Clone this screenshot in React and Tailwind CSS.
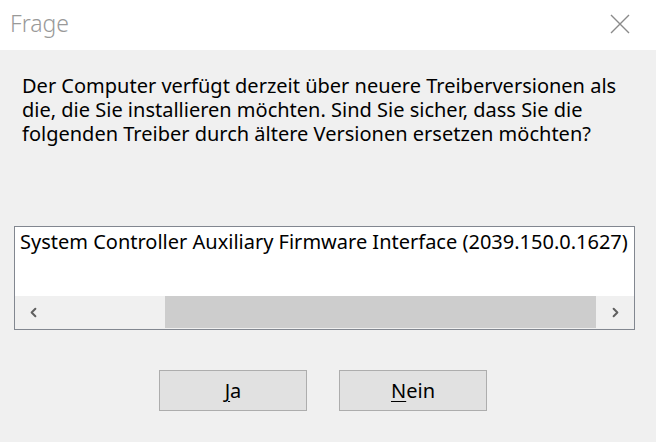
import { ChevronLeft, ChevronRight } from 'lucide-react'

const font = { fontFamily: '"Noto Sans", "Open Sans", sans-serif' }

const DialogButton = ({ mnemonic, rest }) => (
  <button
    type="button"
    className="w-[148px] h-[41px] border border-[#adadad] bg-[#e1e1e1] text-[20px] text-black flex items-center justify-center"
  >
    <span>
      <span className="underline underline-offset-[3px] decoration-1">{mnemonic}</span>
      {rest}
    </span>
  </button>
)

export default function App() {
  return (
    <div className="w-[656px] h-[442px] flex flex-col bg-[#f0f0f0]" style={font}>
      {/* title bar */}
      <div className="h-[50px] bg-white flex items-center justify-between pl-[10px] pr-[26px]">
        <span className="text-[23px] font-light text-[#999999] leading-none pb-[3px]">Frage</span>
        <svg width="20" height="20" viewBox="0 0 20 20" className="text-[#8a8a8a] mb-[2px]">
          <path d="M1 1 L19 19 M19 1 L1 19" stroke="currentColor" strokeWidth="1.4" fill="none" />
        </svg>
      </div>

      {/* message */}
      <div className="pt-[24px] pl-[22px] pr-[10px] text-[20px] leading-[24px] text-black">
        <p>Der Computer verfügt derzeit über neuere Treiberversionen als</p>
        <p>die, die Sie installieren möchten. Sind Sie sicher, dass Sie die</p>
        <p>folgenden Treiber durch ältere Versionen ersetzen möchten?</p>
      </div>

      {/* driver list */}
      <div className="mt-[80px] ml-[14px] w-[621px] border border-[#828790] bg-white">
        <div className="h-[69px] pl-[5px] pt-[3px] text-[20px] leading-[24px] text-black whitespace-nowrap overflow-hidden">
          System Controller Auxiliary Firmware Interface (2039.150.0.1627)
        </div>
        <div className="h-[33px] flex bg-[#f0f0f0]">
          <div className="w-[36px] flex items-center justify-center text-[#606060]">
            <ChevronLeft size={15} strokeWidth={3.2} />
          </div>
          <div className="flex-1 flex pl-[114px] pb-[1px]">
            <div className="flex-1 bg-[#cdcdcd]" />
          </div>
          <div className="w-[38px] flex items-center justify-center text-[#606060]">
            <ChevronRight size={15} strokeWidth={3.2} />
          </div>
        </div>
      </div>

      {/* actions */}
      <div className="mt-[40px] pl-[159px] flex gap-[32px]">
        <DialogButton mnemonic="J" rest="a" />
        <DialogButton mnemonic="N" rest="ein" />
      </div>
    </div>
  )
}
